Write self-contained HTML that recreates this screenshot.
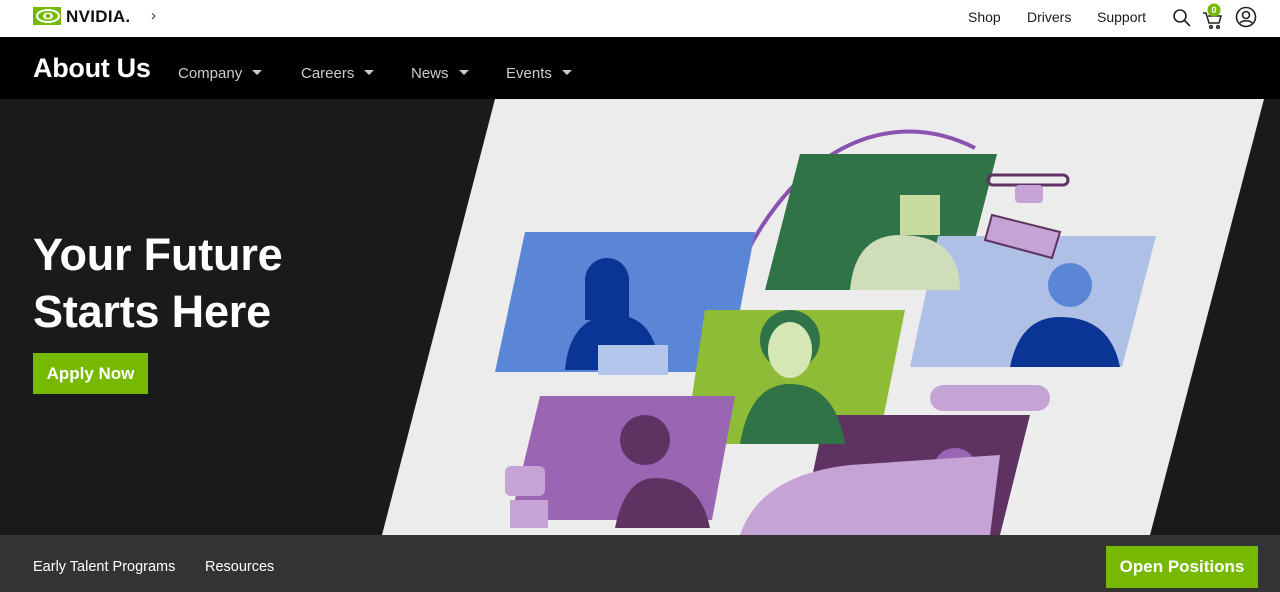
<!DOCTYPE html>
<html><head><meta charset="utf-8"><style>
*{margin:0;padding:0;box-sizing:border-box}
body{width:1280px;height:592px;overflow:hidden;font-family:"Liberation Sans",sans-serif;background:#1a1a1a;position:relative}
.top{position:absolute;left:0;top:0;width:1280px;height:37px;background:#fff}
.top .r{position:absolute;top:9px;font-size:14px;color:#1a1a1a}
.sub{position:absolute;left:0;top:37px;width:1280px;height:62px;background:#000}
.sub .t{position:absolute;left:33px;top:16px;color:#fff;font-size:27px;font-weight:bold;letter-spacing:-0.3px}
.sub .m{position:absolute;top:28px;color:#ccc;font-size:15px}
.sub .m:after{content:"";display:inline-block;margin-left:10px;border-left:5px solid transparent;border-right:5px solid transparent;border-top:5px solid #ccc;vertical-align:3px}
h1{position:absolute;left:33px;top:226px;color:#fff;font-size:45px;line-height:57px;font-weight:bold;letter-spacing:-0.2px}
.apply{position:absolute;left:33px;top:353px;width:115px;height:41px;background:#76b900;color:#fff;font-weight:bold;font-size:17px;line-height:41px;text-align:center}
.bot{position:absolute;left:0;top:535px;width:1280px;height:57px;background:#333}
.bot span{position:absolute;top:24px;color:#fff;font-size:14.5px}
.op{position:absolute;left:1106px;top:11px;width:152px;height:42px;background:#76b900;color:#fff;font-weight:bold;font-size:17px;line-height:42px;text-align:center}
</style></head><body>
<div class="top">
<svg style="position:absolute;left:33px;top:7px" width="28" height="18" viewBox="0 0 28 18"><rect width="28" height="18" fill="#76b900"/><ellipse cx="15" cy="9" rx="11" ry="6" fill="none" stroke="#fff" stroke-width="2"/><ellipse cx="15" cy="9" rx="5" ry="3.5" fill="#fff"/><ellipse cx="15" cy="9" rx="2.5" ry="2" fill="#76b900"/></svg>
<div style="position:absolute;left:66px;top:7px;font-weight:bold;font-size:17px;color:#111;letter-spacing:0.3px">NVIDIA.</div>
<div style="position:absolute;left:151px;top:7px;font-size:15px;color:#333">›</div>
<span class="r" style="left:968px">Shop</span><span class="r" style="left:1027px">Drivers</span><span class="r" style="left:1097px">Support</span>
<svg style="position:absolute;left:1172px;top:8px" width="20" height="20" viewBox="0 0 20 20" fill="none" stroke="#222" stroke-width="1.6"><circle cx="8" cy="8" r="6"/><path d="M12.5 12.5L18 18"/></svg>
<svg style="position:absolute;left:1202px;top:2px" width="22" height="28" viewBox="0 0 22 28" fill="none" stroke="#222" stroke-width="1.5"><path d="M1 11h3l3 10h10l2-7H6"/><circle cx="9" cy="25" r="1.3"/><circle cx="16" cy="25" r="1.3"/><circle cx="12" cy="8" r="6.5" fill="#76b900" stroke="none"/><text x="12" y="11" font-size="9" fill="#fff" stroke="none" text-anchor="middle" font-family="Liberation Sans" font-weight="bold">0</text></svg>
<svg style="position:absolute;left:1235px;top:6px" width="22" height="22" viewBox="0 0 22 22" fill="none" stroke="#222" stroke-width="1.6"><circle cx="11" cy="11" r="9.5"/><circle cx="11" cy="9" r="3.5"/><path d="M5 17c2-3 10-3 12 0"/></svg>
</div>
<div class="sub"><div class="t">About Us</div>
<span class="m" style="left:178px">Company</span><span class="m" style="left:301px">Careers</span><span class="m" style="left:411px">News</span><span class="m" style="left:506px">Events</span></div>
<h1>Your Future<br>Starts Here</h1>
<div class="apply">Apply Now</div>
<svg style="position:absolute;left:0;top:0" width="1280" height="592">
<polygon points="495,99 1264,99 1150,535 382,535" fill="#ececec"/>
<path d="M730,290 C780,160 880,100 975,148" fill="none" stroke="#8c52b0" stroke-width="4"/>
<polygon points="525,232 755,232 728,372 495,372" fill="#5b86d6"/>
<polygon points="800,154 997,154 962,290 765,290" fill="#2f7346"/>
<polygon points="938,236 1156,236 1122,367 910,367" fill="#aec0e6"/>
<polygon points="705,310 905,310 878,444 685,444" fill="#8ebc36"/>
<polygon points="540,396 735,396 712,520 510,520" fill="#9a66b4"/>
<polygon points="825,415 1030,415 1000,535 800,535" fill="#5e3362"/>
<path d="M585,280 a22,22 0 0 1 44,0 v40 h-44z" fill="#0a3594"/><path d="M565,370 q5,-55 50,-55 q40,0 45,55z" fill="#0a3594"/><rect x="598" y="345" width="70" height="30" fill="#b4c6ec"/>
<path d="M900,195 h40 v40 h-40z" fill="#c9dca0"/><path d="M850,290 q5,-55 50,-55 q60,0 60,55z" fill="#cfddbb"/>
<circle cx="1070" cy="285" r="22" fill="#5b86d6"/><path d="M1010,367 q10,-50 50,-50 q50,0 60,50z" fill="#0a3594"/>
<circle cx="790" cy="340" r="30" fill="#2f7346"/><ellipse cx="790" cy="350" rx="22" ry="28" fill="#d5e7b5"/><path d="M740,444 q10,-60 50,-60 q45,0 55,60z" fill="#2f7346"/>
<circle cx="645" cy="440" r="25" fill="#5e3362"/><path d="M615,528 q10,-50 40,-50 q45,0 55,50z" fill="#5e3362"/>
<rect x="505" y="466" width="40" height="30" rx="6" fill="#c5a3d4"/><rect x="510" y="500" width="38" height="28" fill="#c5a3d4"/>
<rect x="930" y="385" width="120" height="26" rx="13" fill="#c5a3d4"/><circle cx="955" cy="470" r="22" fill="#9a66b4"/>
<path d="M740,535 q20,-60 110,-70 l150,-10 l-10,80z" fill="#c5a3d4"/>
<rect x="988" y="175" width="80" height="10" rx="5" fill="none" stroke="#5e3362" stroke-width="3"/><rect x="1015" y="185" width="28" height="18" rx="4" fill="#c5a3d4"/>
<polygon points="992,215 1060,232 1052,258 985,240" fill="#c5a3d4" stroke="#5e3362" stroke-width="2"/>
</svg>
<div class="bot"><span style="left:33px">Early Talent Programs</span><span style="left:205px">Resources</span><div class="op">Open Positions</div></div>
</body></html>
